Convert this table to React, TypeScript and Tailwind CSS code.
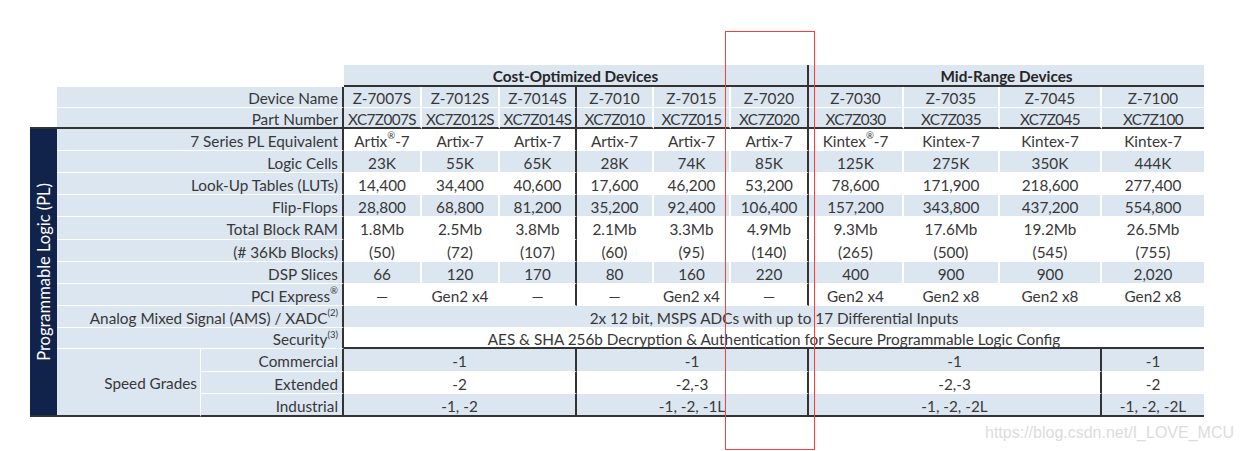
import React from 'react';
import clsx from 'clsx';

type Tone = 'blue' | 'white';
type Edge = 'white' | 'dark' | 'none';

const bgMap: Record<Tone, string> = { blue: 'bg-[#dce6f1]', white: 'bg-white' };
const rightMap: Record<Edge, string> = {
  white: 'border-r-2 border-r-white',
  dark: 'border-r-2 border-r-[#333]',
  none: '',
};
const bottomMap: Record<Edge, string> = {
  white: 'border-b border-b-white',
  dark: 'border-b-2 border-b-[#333]',
  none: '',
};
const spanMap: Record<number, string> = {
  1: 'col-span-1',
  2: 'col-span-2',
  3: 'col-span-3',
  4: 'col-span-4',
  6: 'col-span-6',
  10: 'col-span-10',
};

function Sup({ children }: { children: React.ReactNode }) {
  return <span className="relative -top-[5px] text-[9.5px] leading-none">{children}</span>;
}

function Cell({
  children,
  tone = 'blue',
  right = 'white',
  bottom = 'white',
  span = 1,
  align = 'center',
  bold = false,
  tight = false,
}: {
  children?: React.ReactNode;
  tone?: Tone;
  right?: Edge;
  bottom?: Edge;
  span?: number;
  align?: 'center' | 'right';
  bold?: boolean;
  tight?: boolean;
}) {
  return (
    <div
      className={clsx(
        'flex items-center whitespace-nowrap overflow-visible pt-[3px]',
        bgMap[tone],
        rightMap[right],
        bottomMap[bottom],
        spanMap[span],
        align === 'center' ? 'justify-center' : 'justify-end pr-[4px]',
        bold && 'font-bold text-[#262626]',
        tight && 'tracking-[-0.6px]'
      )}
    >
      {children}
    </div>
  );
}

type Row = { label: React.ReactNode; values: React.ReactNode[]; tone: Tone; bottom?: Edge };

const rows: Row[] = [
  {
    label: '7 Series PL Equivalent',
    tone: 'white',
    values: [
      <>Artix<Sup>®</Sup>-7</>,
      'Artix-7',
      'Artix-7',
      'Artix-7',
      'Artix-7',
      'Artix-7',
      <>Kintex<Sup>®</Sup>-7</>,
      'Kintex-7',
      'Kintex-7',
      'Kintex-7',
    ],
  },
  { label: 'Logic Cells', tone: 'blue', values: ['23K', '55K', '65K', '28K', '74K', '85K', '125K', '275K', '350K', '444K'] },
  {
    label: 'Look-Up Tables (LUTs)',
    tone: 'white',
    values: ['14,400', '34,400', '40,600', '17,600', '46,200', '53,200', '78,600', '171,900', '218,600', '277,400'],
  },
  {
    label: 'Flip-Flops',
    tone: 'blue',
    values: ['28,800', '68,800', '81,200', '35,200', '92,400', '106,400', '157,200', '343,800', '437,200', '554,800'],
  },
  {
    label: 'Total Block RAM',
    tone: 'white',
    values: ['1.8Mb', '2.5Mb', '3.8Mb', '2.1Mb', '3.3Mb', '4.9Mb', '9.3Mb', '17.6Mb', '19.2Mb', '26.5Mb'],
  },
  {
    label: '(# 36Kb Blocks)',
    tone: 'white',
    values: ['(50)', '(72)', '(107)', '(60)', '(95)', '(140)', '(265)', '(500)', '(545)', '(755)'],
  },
  { label: 'DSP Slices', tone: 'blue', values: ['66', '120', '170', '80', '160', '220', '400', '900', '900', '2,020'] },
  {
    label: <>PCI Express<Sup>®</Sup></>,
    tone: 'white',
    values: ['—', 'Gen2 x4', '—', '—', 'Gen2 x4', '—', 'Gen2 x4', 'Gen2 x8', 'Gen2 x8', 'Gen2 x8'],
  },
];

const devices = ['Z-7007S', 'Z-7012S', 'Z-7014S', 'Z-7010', 'Z-7015', 'Z-7020', 'Z-7030', 'Z-7035', 'Z-7045', 'Z-7100'];
const parts = ['XC7Z007S', 'XC7Z012S', 'XC7Z014S', 'XC7Z010', 'XC7Z015', 'XC7Z020', 'XC7Z030', 'XC7Z035', 'XC7Z045', 'XC7Z100'];

const speed: { label: string; tone: Tone; values: string[]; bottom: Edge }[] = [
  { label: 'Commercial', tone: 'blue', values: ['-1', '-1', '-1', '-1'], bottom: 'white' },
  { label: 'Extended', tone: 'white', values: ['-2', '-2,-3', '-2,-3', '-2'], bottom: 'white' },
  { label: 'Industrial', tone: 'blue', values: ['-1, -2', '-1, -2, -1L', '-1, -2, -2L', '-1, -2, -2L'], bottom: 'dark' },
];

const rightFor = (i: number): Edge => (i === 2 || i === 5 ? 'dark' : i === 9 ? 'none' : 'white');

function DataRow({
  values,
  tone,
  bottom = 'white',
  tight = false,
}: {
  values: React.ReactNode[];
  tone: Tone;
  bottom?: Edge;
  tight?: boolean;
}) {
  return (
    <>
      {values.map((v, i) => (
        <Cell key={i} tone={tone} right={rightFor(i)} bottom={bottom} tight={tight}>
          {v}
        </Cell>
      ))}
    </>
  );
}

export default function App() {
  return (
    <div className="relative w-[1240px] h-[451px] bg-white overflow-hidden pl-[30px] pt-[65px] font-['Lato','Open_Sans',sans-serif] text-[15.3px] text-[#383838]">
      <div className="grid w-[1174px] grid-cols-[27px_144px_143px_78px_78px_77px_77px_77px_78px_95px_96px_102px_102px] grid-rows-[22px_21px_21px_22px_22px_22px_22px_23px_22px_22px_22px_22px_21px_23px_22px_23px]">
        {/* header */}
        <div className="col-span-3 bg-white" />
        <Cell span={6} right="dark" bottom="dark" bold>
          Cost-Optimized Devices
        </Cell>
        <Cell span={4} right="none" bottom="dark" bold>
          Mid-Range Devices
        </Cell>

        {/* device name */}
        <div className="bg-white" />
        <Cell span={2} align="right" right="dark">
          Device Name
        </Cell>
        <DataRow values={devices} tone="blue" />

        {/* part number */}
        <div className="bg-white border-b-2 border-b-[#333]" />
        <Cell span={2} align="right" right="dark" bottom="dark">
          Part Number
        </Cell>
        <DataRow values={parts} tone="blue" bottom="dark" tight />

        {/* band + PL rows */}
        <div className="row-span-13 bg-[#12234b] border-b-2 border-b-[#333] flex items-center justify-center pl-[2px]">
          <span className="[writing-mode:vertical-rl] rotate-180 text-white text-[16.5px] whitespace-nowrap">
            Programmable Logic (PL)
          </span>
        </div>
        {rows.map((r, idx) => (
          <React.Fragment key={idx}>
            <Cell span={2} align="right" right="dark">
              {r.label}
            </Cell>
            <DataRow values={r.values} tone={r.tone} />
          </React.Fragment>
        ))}

        {/* AMS */}
        <Cell span={2} align="right" right="dark">
          Analog Mixed Signal (AMS) / XADC<Sup>(2)</Sup>
        </Cell>
        <Cell span={10} right="none">
          2x 12 bit, MSPS ADCs with up to 17 Differential Inputs
        </Cell>

        {/* Security */}
        <Cell span={2} align="right" right="dark">
          Security<Sup>(3)</Sup>
        </Cell>
        <Cell span={10} tone="white" right="none" bottom="dark">
          AES &amp; SHA 256b Decryption &amp; Authentication for Secure Programmable Logic Config
        </Cell>

        {/* speed grades */}
        <div className="row-span-3 flex items-center justify-end pr-[3px] pt-[3px] bg-[#dce6f1] border-r border-r-white border-b-2 border-b-[#333]">
          Speed Grades
        </div>
        {speed.map((s, idx) => (
          <React.Fragment key={idx}>
            <Cell align="right" right="dark" bottom={s.bottom}>
              {s.label}
            </Cell>
            <Cell span={3} tone={s.tone} right="dark" bottom={s.bottom}>
              {s.values[0]}
            </Cell>
            <Cell span={3} tone={s.tone} right="dark" bottom={s.bottom}>
              {s.values[1]}
            </Cell>
            <Cell span={3} tone={s.tone} right="dark" bottom={s.bottom}>
              {s.values[2]}
            </Cell>
            <Cell tone={s.tone} right="none" bottom={s.bottom}>
              {s.values[3]}
            </Cell>
          </React.Fragment>
        ))}
      </div>

      {/* annotation rectangle overlay */}
      <div className="absolute left-[725px] top-[31px] w-[90px] h-[419px] border border-[#ff3b3b] pointer-events-none" />

      {/* watermark overlay */}
      <div className="absolute left-[985px] top-[423px] font-['Liberation_Sans',Arial,sans-serif] text-[16px] text-[#dcdcdc] leading-[20px]">
        https://blog.csdn.net/I_LOVE_MCU
      </div>
    </div>
  );
}
